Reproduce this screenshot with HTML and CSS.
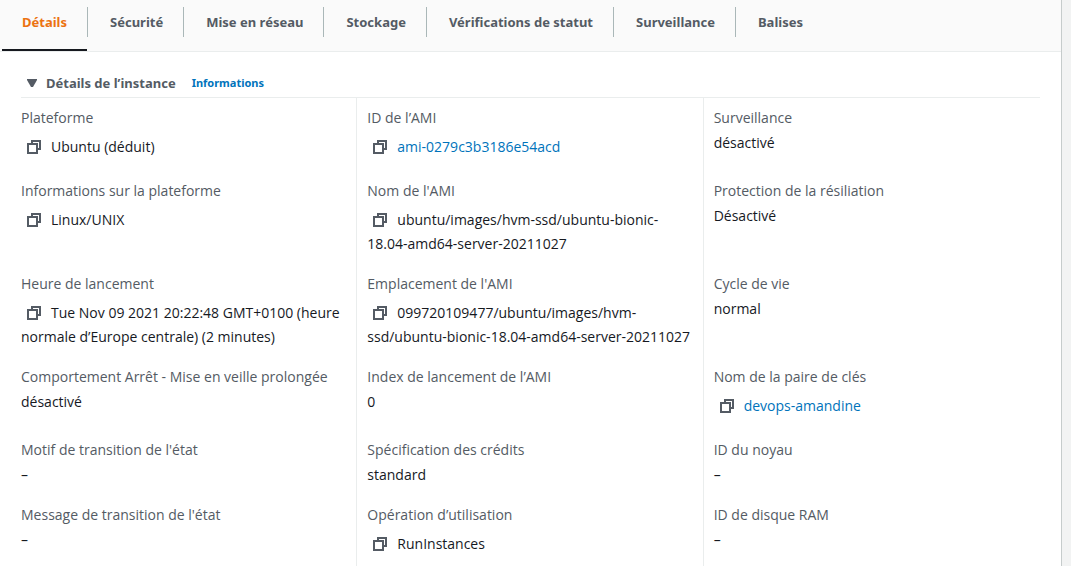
FILE: index.html
```html
<!DOCTYPE html>
<html lang="fr">
<head>
<meta charset="utf-8">
<title>Détails de l’instance</title>
<link rel="stylesheet" href="styles.css">
</head>
<body>
<svg class="sprite" aria-hidden="true">
  <symbol id="copy" viewBox="0 0 14 14">
    <path d="M5 4V1h8v8h-3M1 4h9v9H1z" fill="none" stroke="currentColor" stroke-width="2"/>
  </symbol>
</svg>
<main class="panel">
  <nav class="tabs">
    <button class="tab tab-active" type="button">Détails</button>
    <button class="tab" type="button">Sécurité</button>
    <button class="tab" type="button">Mise en réseau</button>
    <button class="tab" type="button">Stockage</button>
    <button class="tab" type="button">Vérifications de statut</button>
    <button class="tab" type="button">Surveillance</button>
    <button class="tab" type="button">Balises</button>
  </nav>
  <section class="content">
    <header class="section-head">
      <button class="toggle" type="button"><svg class="caret" viewBox="0 0 10 8" aria-hidden="true"><path d="M0 0h10v1L6 8H4L0 1z" fill="currentColor"/></svg>Détails de l’instance</button>
      <a class="info" href="#">Informations</a>
    </header>
    <dl class="details">
      <div class="cell"><dt>Plateforme</dt><dd><button class="copy" type="button" aria-label="Copier"><svg><use href="#copy"/></svg></button>Ubuntu (déduit)</dd></div>
      <div class="cell"><dt>ID de l’AMI</dt><dd><button class="copy" type="button" aria-label="Copier"><svg><use href="#copy"/></svg></button><a href="#">ami-0279c3b3186e54acd</a></dd></div>
      <div class="cell"><dt>Surveillance</dt><dd>désactivé</dd></div>

      <div class="cell"><dt>Informations sur la plateforme</dt><dd><button class="copy" type="button" aria-label="Copier"><svg><use href="#copy"/></svg></button>Linux/UNIX</dd></div>
      <div class="cell"><dt>Nom de l'AMI</dt><dd><button class="copy" type="button" aria-label="Copier"><svg><use href="#copy"/></svg></button>ubuntu/images/hvm-ssd/ubuntu-bionic-<wbr><span class="keep">18.04-amd64-server-20211027</span></dd></div>
      <div class="cell"><dt>Protection de la résiliation</dt><dd>Désactivé</dd></div>

      <div class="cell"><dt>Heure de lancement</dt><dd><button class="copy" type="button" aria-label="Copier"><svg><use href="#copy"/></svg></button>Tue Nov 09 2021 20:22:48 GMT+0100 (heure normale d’Europe centrale) (2 minutes)</dd></div>
      <div class="cell"><dt>Emplacement de l'AMI</dt><dd><button class="copy" type="button" aria-label="Copier"><svg><use href="#copy"/></svg></button>099720109477/ubuntu/images/hvm-<wbr><span class="keep">ssd/ubuntu-bionic-18.04-amd64-server-20211027</span></dd></div>
      <div class="cell"><dt>Cycle de vie</dt><dd>normal</dd></div>

      <div class="cell"><dt>Comportement Arrêt - Mise en veille prolongée</dt><dd>désactivé</dd></div>
      <div class="cell"><dt>Index de lancement de l’AMI</dt><dd>0</dd></div>
      <div class="cell"><dt>Nom de la paire de clés</dt><dd><button class="copy" type="button" aria-label="Copier"><svg><use href="#copy"/></svg></button><a href="#">devops-amandine</a></dd></div>

      <div class="cell"><dt>Motif de transition de l'état</dt><dd>–</dd></div>
      <div class="cell"><dt>Spécification des crédits</dt><dd>standard</dd></div>
      <div class="cell"><dt>ID du noyau</dt><dd>–</dd></div>

      <div class="cell"><dt>Message de transition de l'état</dt><dd>–</dd></div>
      <div class="cell"><dt>Opération d’utilisation</dt><dd><button class="copy" type="button" aria-label="Copier"><svg><use href="#copy"/></svg></button>RunInstances</dd></div>
      <div class="cell"><dt>ID de disque RAM</dt><dd>–</dd></div>
    </dl>
  </section>
</main>
</body>
</html>
```
FILE: styles.css
```css
* { box-sizing: border-box; }

body {
  margin: 0;
  background: #f2f3f3;
  color: #16191f;
  font: 14px/20px "Open Sans", sans-serif;
}

button {
  margin: 0;
  border: 0;
  padding: 0;
  background: none;
  color: inherit;
  font: inherit;
  cursor: pointer;
}

a { color: #0073bb; text-decoration: none; }
a:hover { text-decoration: underline; }

.sprite { display: none; }

.panel {
  display: flex;
  flex-direction: column;
  min-height: 100vh;
  margin-right: 9px;
  border-right: 1px solid #c6cccc;
  background: #fff;
}

.tabs {
  display: flex;
  padding-left: 2px;
  border-bottom: 1px solid #eaeded;
  background: #fafafa;
}

.tab {
  display: flex;
  padding: 7px 0 12px;
  border-bottom: 2px solid transparent;
  color: #545b64;
  font: bold 13px/30px "Noto Sans", sans-serif;
}

.tab::before,
.tab::after {
  content: "";
  width: 20px;
}

.tab:not(:first-child)::before {
  border-left: 1px solid #aab7b8;
  width: 22px;
}

.tab-active {
  border-bottom-color: #16191f;
  color: #ec7211;
}

.content {
  display: flex;
  flex: 1;
  flex-direction: column;
  padding: 20px 21px 0;
}

.section-head {
  display: flex;
  align-items: center;
  gap: 16px;
  padding: 1px 6px 4px;
  border-bottom: 1px solid #eaeded;
}

.toggle {
  display: flex;
  align-items: center;
  gap: 9px;
  color: #545b64;
  font: bold 13px/20px "Noto Sans", sans-serif;
}

.caret { width: 10px; height: 8px; }

.info { font: bold 11px/20px "Noto Sans", sans-serif; }

.details {
  display: grid;
  flex: 1;
  grid-template-columns: repeat(3, minmax(0, 1fr));
  grid-template-rows: repeat(5, auto) 1fr;
  margin: 0 -9px 0 -11px;
}

.cell {
  padding: 0 10px 20px;
  border-left: 1px solid #eaeded;
}

.cell:nth-child(3n + 1) { border-left-color: transparent; }
.cell:nth-child(-n + 3) { padding-top: 10px; }
.cell:nth-last-child(-n + 3) { padding-bottom: 4px; }

dt { margin-bottom: 5px; color: #545b64; }
dd { margin: 0; overflow-wrap: break-word; }

.keep { white-space: nowrap; }

.copy {
  display: inline-flex;
  align-items: center;
  width: 30px;
  height: 28px;
  padding-left: 6px;
  color: #545b64;
  vertical-align: -2px;
}

.copy svg { width: 14px; height: 14px; }
```
